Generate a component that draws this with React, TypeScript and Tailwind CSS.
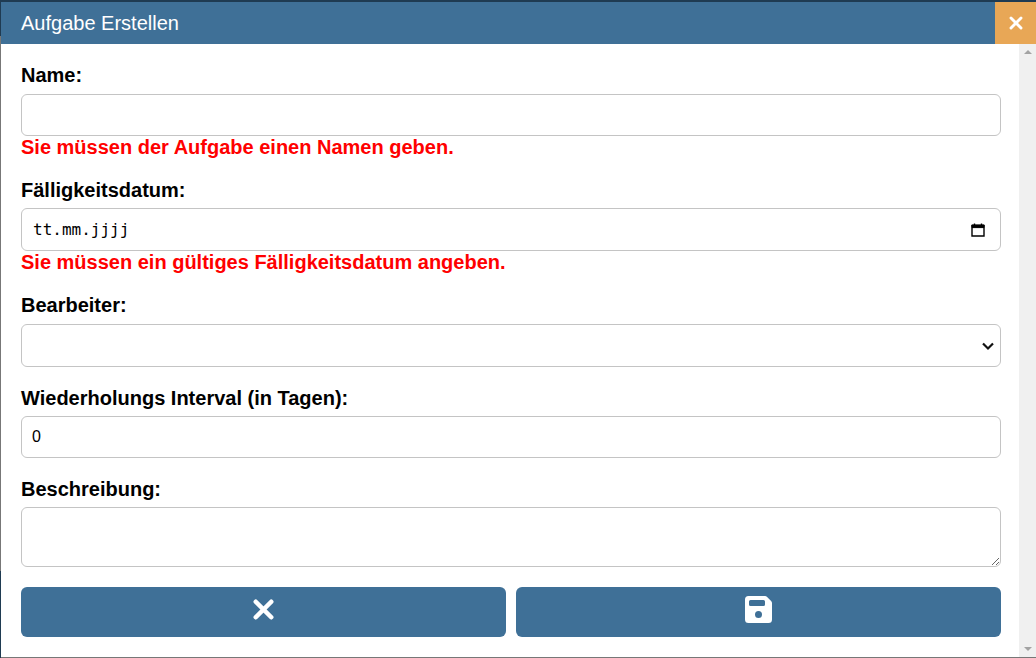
import { X } from "lucide-react";

const boxCls = "block w-full rounded-[6px] border border-[#c4c4c4] bg-white text-[16px] text-black outline-none";
const buttonCls = "flex h-[50px] flex-1 items-center justify-center rounded-[6px] bg-[#3f7097] text-white";

function Label({ children, className }: { children: string; className: string }) {
  return <label className={`block h-[20px] text-[20px] leading-[20px] font-bold text-black ${className}`}>{children}</label>;
}

function ErrorText({ children }: { children: string }) {
  return <div className="h-[24px] text-[20px] leading-[22px] font-bold text-[#ff0000]">{children}</div>;
}

export default function App() {
  return (
    <div className="flex h-[658px] w-[1036px] bg-white font-['Liberation_Sans',Arial,sans-serif]">
      {/* page behind the dialog shows through on the left edge */}
      <div className="flex w-[1px] shrink-0 flex-col">
        <div className="h-[36px] bg-[#1f3b52]" />
        <div className="h-[535px] bg-[#777777]" />
        <div className="flex-1 bg-[#1f3b52]" />
      </div>
      <div className="flex min-w-0 flex-1 flex-col border-t-2 border-b border-t-[#1f3b52] border-b-[#777777]">
        <div className="flex h-[42px] shrink-0 items-center justify-between bg-[#3f7097]">
          <span className="pl-[20px] text-[20px] text-white">Aufgabe Erstellen</span>
          <button className="flex h-[42px] w-[41px] items-center justify-center bg-[#e8a756] text-white">
            <X size={20} strokeWidth={3.5} />
          </button>
        </div>
        <div className="flex min-h-0 flex-1">
          <form className="min-w-0 flex-1 pt-[21px] pr-[18px] pl-[20px]">
            <Label className="mb-[9px]">Name:</Label>
            <input className={`${boxCls} h-[42px] px-[11px]`} />
            <ErrorText>Sie müssen der Aufgabe einen Namen geben.</ErrorText>

            <Label className="mt-[20px] mb-[8px]">Fälligkeitsdatum:</Label>
            <div className={`${boxCls} flex h-[43px] items-center justify-between pr-[14px] pl-[11px]`}>
              <span className="font-['DejaVu_Sans_Mono',monospace] text-[16px]">tt.mm.jjjj</span>
              <svg width="16" height="16" viewBox="0 0 16 16" fill="none" stroke="#000">
                <path d="M2 3.500h12v10.500H2z" strokeWidth="1.4" />
                <path d="M2 3h12v2.600H2z" fill="#000" strokeWidth="1" />
                <path d="M4.500 1.500v2M11.500 1.500v2" strokeWidth="1.4" />
              </svg>
            </div>
            <ErrorText>Sie müssen ein gültiges Fälligkeitsdatum angeben.</ErrorText>

            <Label className="mt-[20px] mb-[9px]">Bearbeiter:</Label>
            <div className={`${boxCls} flex h-[43px] items-center justify-end pr-[5px]`}>
              <svg width="14" height="14" viewBox="0 0 14 14" fill="none" stroke="#111" strokeWidth="2.2">
                <path d="M2 4.500l5 5 5-5" />
              </svg>
            </div>

            <Label className="mt-[21px] mb-[8px]">Wiederholungs Interval (in Tagen):</Label>
            <input className={`${boxCls} h-[42px] pr-[11px] pl-[10px]`} defaultValue="0" />

            <Label className="mt-[21px] mb-[8px]">Beschreibung:</Label>
            <textarea className={`${boxCls} h-[60px] px-[11px]`} />

            <div className="mt-[20px] flex gap-[10px]">
              <button type="button" className={buttonCls}>
                <X size={31} strokeWidth={3.5} className="-translate-y-[3px]" />
              </button>
              <button type="button" className={buttonCls}>
                <svg width="27" height="27" viewBox="0 0 27 27" className="-translate-y-[3px]">
                  <path
                    fillRule="evenodd"
                    fill="#fff"
                    d="M3.500 0H20a3 3 0 0 1 2.100.9l4 4A3 3 0 0 1 27 7v16.500a3.500 3.500 0 0 1-3.500 3.500h-20A3.500 3.500 0 0 1 0 23.500v-20A3.500 3.500 0 0 1 3.500 0zM5.500 4A1.500 1.500 0 0 0 4 5.500v3A1.500 1.500 0 0 0 5.500 10h13A1.500 1.500 0 0 0 20 8.500v-3A1.500 1.500 0 0 0 18.500 4zM13.500 15a3.500 3.500 0 1 0 0 7 3.500 3.500 0 0 0 0-7z"
                  />
                </svg>
              </button>
            </div>
          </form>
          <div className="flex w-[17px] shrink-0 flex-col items-center justify-between bg-[#f0f0f0] py-[6px]">
            <div className="h-0 w-0 border-x-[4px] border-b-[4px] border-x-transparent border-b-[#a3a3a3]" />
            <div className="h-0 w-0 border-x-[4px] border-t-[4px] border-x-transparent border-t-[#a3a3a3]" />
          </div>
        </div>
      </div>
    </div>
  );
}
